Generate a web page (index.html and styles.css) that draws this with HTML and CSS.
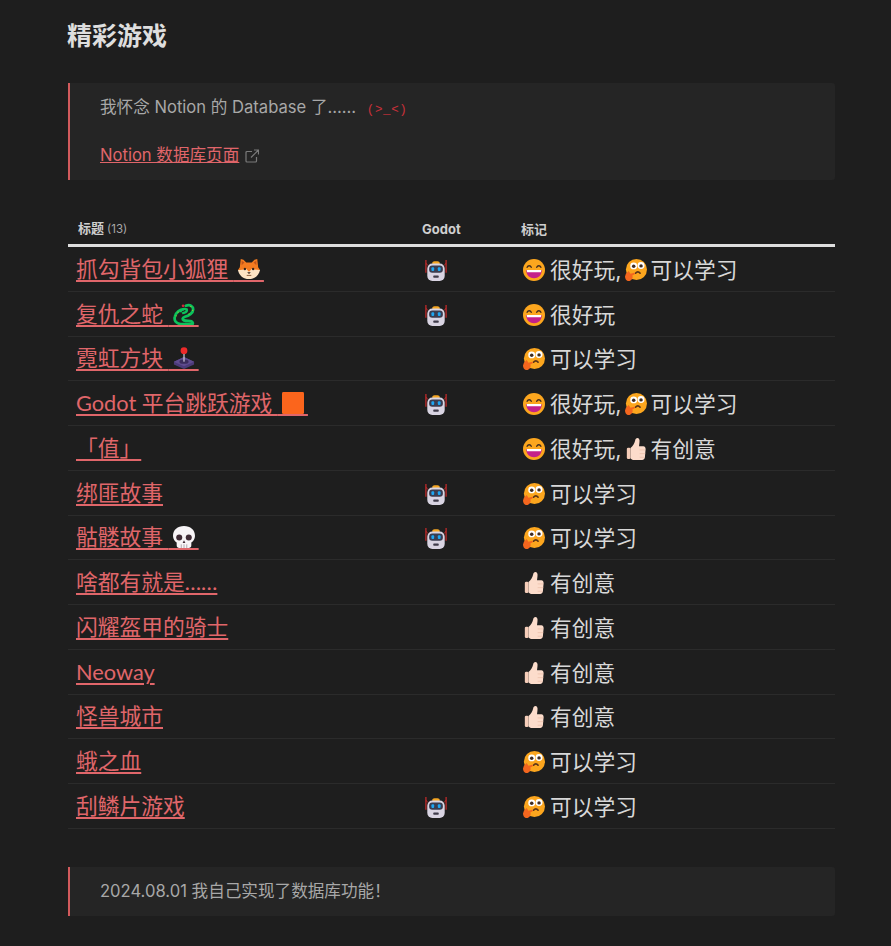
FILE: index.html
```html
<!DOCTYPE html>
<html lang="zh">
<head>
<meta charset="utf-8">
<title>精彩游戏</title>
<link rel="stylesheet" href="styles.css">
</head>
<body>
<svg class="defs" aria-hidden="true">
  <symbol id="fox" viewBox="0 0 24 24">
    <path d="M3 1l3 1 3 3h6l3-3 3-1 1 9 2 3-4 5-8 1-8-1-4-5 2-3z" fill="#f47b20"/>
    <path d="M4 3l3 2-3 3zM20 3l-3 2 3 3z" fill="#c4541a"/>
    <path d="M0 13c3 0 6 0 9-1l3 3 3-3c3 1 6 1 9 1-1 6-6 10-12 10S1 19 0 13z" fill="#fde4c4"/>
    <circle cx="7.500" cy="12" r="1.300" fill="#33231c"/><circle cx="16.500" cy="12" r="1.300" fill="#33231c"/>
    <path d="M10 15.500h4l-2 2z" fill="#33231c"/><path d="M9.500 19h5" stroke="#8a5a3a" stroke-width="1" fill="none"/>
  </symbol>
  <symbol id="snake" viewBox="0 0 24 24">
    <path d="M14 3c5-2 8 1 8 4 0 4-5 7-9 8-3 1-3 3-1 4 3 1 6 0 8 1 2 1 2 3 1 3H8c-5-1-7-4-6-8 1-5 6-8 9-8" fill="none" stroke="#0bc25b" stroke-width="3" stroke-linecap="round"/>
    <path d="M8 10c1-4 5-4 7-3 1 3-3 4-5 4" fill="none" stroke="#0bc25b" stroke-width="2.600"/>
    <circle cx="11" cy="3" r="1.500" fill="#d3263a"/>
    <path d="M19 4h1M21 8h1M17 12h1M5 10h1M3 14h1" stroke="#e8d21e" stroke-width="1"/>
  </symbol>
  <symbol id="joystick" viewBox="0 0 24 24">
    <path d="M1 16l11-5 11 5v3l-11 5-11-5z" fill="#4b3a78"/>
    <path d="M1 16l11-5 11 5-11 5z" fill="#5f4b8f"/>
    <ellipse cx="12" cy="16" rx="5" ry="2.400" fill="#3a2c5c"/>
    <rect x="11.300" y="6" width="1.400" height="10" fill="#c9c4d6"/>
    <circle cx="12" cy="4" r="3.700" fill="#ee2a2a"/>
  </symbol>
  <symbol id="square" viewBox="0 0 24 24">
    <rect x="0" y="0" width="24" height="24" rx="1.500" fill="#fb651c"/>
  </symbol>
  <symbol id="skull" viewBox="0 0 24 24">
    <path d="M12 0C5 0 0 4 0 11c0 3 2 6 4 7v3c0 2 1 3 3 3h10c2 0 3-1 3-3v-3c2-1 4-4 4-7C24 4 19 0 12 0z" fill="#f7f4f6"/>
    <circle cx="6.800" cy="12.500" r="3.300" fill="#3f2b35"/><circle cx="17.200" cy="12.500" r="3.300" fill="#3f2b35"/>
    <path d="M12 15.500l1.500 3h-3z" fill="#3f2b35"/>
    <path d="M9 20v4M12 20v4M15 20v4" stroke="#a9a2a8" stroke-width="1"/>
  </symbol>
  <symbol id="robot" viewBox="0 0 24 24">
    <path d="M8 4c0-2 8-2 8 0v1.500H8z" fill="#f5a623"/>
    <path d="M1 1v14M23 1v14" stroke="#d92c2c" stroke-width="1.200"/>
    <path d="M1 5c0 0 1 0 2 2M23 5c0 0-1 0-2 2" stroke="#d92c2c" stroke-width="1" fill="none"/>
    <rect x="2.500" y="5" width="19" height="19" rx="5.500" fill="#d9d4e2"/>
    <rect x="4.500" y="7" width="15" height="8" rx="3.500" fill="#3a3d50"/>
    <rect x="7" y="9" width="3" height="4" rx="1" fill="#1ea7f2"/>
    <rect x="14" y="9" width="3" height="4" rx="1" fill="#1ea7f2"/>
    <rect x="9" y="18" width="6" height="2.500" rx=".8" fill="#3f3b4a"/>
  </symbol>
  <symbol id="grin" viewBox="0 0 24 24">
    <circle cx="12" cy="12" r="12" fill="#fca61e"/>
    <path d="M4.500 9c1-2.200 3.500-2.200 4.500 0M15 9c1-2.200 3.500-2.200 4.500 0" fill="none" stroke="#3f2b20" stroke-width="1.500" stroke-linecap="round"/>
    <path d="M3.500 12h17c0 6-4 9-8.500 9s-8.500-3-8.500-9z" fill="#c4218a"/>
    <path d="M4 12h16l-.5 2.500h-15z" fill="#fff"/>
  </symbol>
  <symbol id="think" viewBox="0 0 24 24">
    <circle cx="12.500" cy="11.500" r="11.500" fill="#fca61e"/>
    <circle cx="9.500" cy="7.500" r="3.800" fill="#fff"/><circle cx="17.500" cy="7" r="3.800" fill="#fff"/>
    <circle cx="9.500" cy="8" r="1.900" fill="#3f2b20"/><circle cx="17.500" cy="7.500" r="1.900" fill="#3f2b20"/>
    <path d="M11.500 15.500c1.500-2 3.500-2 5 0" fill="none" stroke="#5c3518" stroke-width="1.800" stroke-linecap="round"/>
    <path d="M1 16l3-3 2 3 4-1c1 0 1 2 0 2l-2 1c1 2 0 5-3 6H3c-2-1-3-3-3-5z" fill="#f4661e"/>
  </symbol>
  <symbol id="thumb" viewBox="0 0 24 24">
    <path d="M13.500 0c1.800 0 2.800 2 2.300 4.500L15.300 9h4.700c1.500 0 2.500 1.300 2.500 3l-.8 9c-.3 2-1.500 3-3 3H10c-2 0-3-1-4-2V11c2.500-2 4.300-5 5-8 .3-2 1.300-3 2.500-3z" fill="#fcdccb"/>
    <rect x="2" y="10.500" width="4" height="12.500" rx="1.500" fill="#f6cdb9"/>
    <path d="M16 13h6M16 17h6M16 21h5" stroke="#efc4af" stroke-width="1" fill="none"/>
  </symbol>
</svg>

<main class="page">
  <h2 class="heading">精彩游戏</h2>

  <section class="callout callout-tall">
    <p class="callout-line">我怀念 Notion 的 Database 了…… <code class="kaomoji">(&gt;_&lt;)</code></p>
    <p class="callout-line callout-link-line">
      <a class="callout-link" href="#">Notion 数据库页面</a>
      <svg class="ext" viewBox="0 0 14 14" aria-hidden="true"><path d="M7 2.500H2a1 1 0 0 0-1 1V12a1 1 0 0 0 1 1h8.500a1 1 0 0 0 1-1V8M6 8.500L13 1.500M9 1h4.500v4.500" fill="none" stroke="#7b7b7b" stroke-width="1.200"/></svg>
    </p>
  </section>

  <section class="table">
    <div class="row head">
      <div class="cell">标题 <span class="count">(13)</span></div>
      <div class="cell">Godot</div>
      <div class="cell">标记</div>
    </div>

    <div class="row">
      <div class="cell"><a class="game" href="#">抓勾背包小狐狸 <span class="emoji"><svg class="ico"><use href="#fox"/></svg>&nbsp;</span></a></div>
      <div class="cell"><svg class="ico robot"><use href="#robot"/></svg></div>
      <div class="cell tags"><svg class="ico"><use href="#grin"/></svg><span>很好玩,</span><svg class="ico second"><use href="#think"/></svg><span>可以学习</span></div>
    </div>
    <div class="row">
      <div class="cell"><a class="game" href="#">复仇之蛇 <span class="emoji"><svg class="ico"><use href="#snake"/></svg>&nbsp;</span></a></div>
      <div class="cell"><svg class="ico robot"><use href="#robot"/></svg></div>
      <div class="cell tags"><svg class="ico"><use href="#grin"/></svg><span>很好玩</span></div>
    </div>
    <div class="row">
      <div class="cell"><a class="game" href="#">霓虹方块 <span class="emoji"><svg class="ico"><use href="#joystick"/></svg>&nbsp;</span></a></div>
      <div class="cell"></div>
      <div class="cell tags"><svg class="ico"><use href="#think"/></svg><span>可以学习</span></div>
    </div>
    <div class="row">
      <div class="cell"><a class="game" href="#">Godot 平台跳跃游戏 <span class="emoji"><svg class="ico"><use href="#square"/></svg>&nbsp;</span></a></div>
      <div class="cell"><svg class="ico robot"><use href="#robot"/></svg></div>
      <div class="cell tags"><svg class="ico"><use href="#grin"/></svg><span>很好玩,</span><svg class="ico second"><use href="#think"/></svg><span>可以学习</span></div>
    </div>
    <div class="row">
      <div class="cell"><a class="game" href="#">「值」</a></div>
      <div class="cell"></div>
      <div class="cell tags"><svg class="ico"><use href="#grin"/></svg><span>很好玩,</span><svg class="ico second"><use href="#thumb"/></svg><span>有创意</span></div>
    </div>
    <div class="row">
      <div class="cell"><a class="game" href="#">绑匪故事</a></div>
      <div class="cell"><svg class="ico robot"><use href="#robot"/></svg></div>
      <div class="cell tags"><svg class="ico"><use href="#think"/></svg><span>可以学习</span></div>
    </div>
    <div class="row">
      <div class="cell"><a class="game" href="#">骷髅故事 <span class="emoji"><svg class="ico"><use href="#skull"/></svg>&nbsp;</span></a></div>
      <div class="cell"><svg class="ico robot"><use href="#robot"/></svg></div>
      <div class="cell tags"><svg class="ico"><use href="#think"/></svg><span>可以学习</span></div>
    </div>
    <div class="row">
      <div class="cell"><a class="game" href="#">啥都有就是……</a></div>
      <div class="cell"></div>
      <div class="cell tags"><svg class="ico"><use href="#thumb"/></svg><span>有创意</span></div>
    </div>
    <div class="row">
      <div class="cell"><a class="game" href="#">闪耀盔甲的骑士</a></div>
      <div class="cell"></div>
      <div class="cell tags"><svg class="ico"><use href="#thumb"/></svg><span>有创意</span></div>
    </div>
    <div class="row">
      <div class="cell"><a class="game" href="#">Neoway</a></div>
      <div class="cell"></div>
      <div class="cell tags"><svg class="ico"><use href="#thumb"/></svg><span>有创意</span></div>
    </div>
    <div class="row">
      <div class="cell"><a class="game" href="#">怪兽城市</a></div>
      <div class="cell"></div>
      <div class="cell tags"><svg class="ico"><use href="#thumb"/></svg><span>有创意</span></div>
    </div>
    <div class="row">
      <div class="cell"><a class="game" href="#">蛾之血</a></div>
      <div class="cell"></div>
      <div class="cell tags"><svg class="ico"><use href="#think"/></svg><span>可以学习</span></div>
    </div>
    <div class="row">
      <div class="cell"><a class="game" href="#">刮鳞片游戏</a></div>
      <div class="cell"><svg class="ico robot"><use href="#robot"/></svg></div>
      <div class="cell tags"><svg class="ico"><use href="#think"/></svg><span>可以学习</span></div>
    </div>
  </section>

  <section class="callout callout-short">
    <p class="callout-line">2024.08.01 我自己实现了数据库功能！</p>
  </section>
</main>
</body>
</html>
```

FILE: styles.css
```css
* { box-sizing: border-box; }

html, body { height: 100%; }

body {
  margin: 0;
  background: #1e1e1e;
  color: #dcdcdc;
  font-family: Inter, "Noto Sans CJK SC", sans-serif;
  overflow: hidden;
}

.defs { display: none; }

.page {
  width: 767px;
  margin-left: 68px;
}

.heading {
  margin: 0 0 0 -1px;
  padding-top: 20px;
  height: 83px;
  font-size: 25px;
  line-height: 32px;
  font-weight: 700;
  color: #dedede;
}

.callout {
  background: #252525;
  border-left: 2px solid #d25a5c;
  border-radius: 0 3px 3px 0;
  padding: 12px 30px;
  color: #a8a8a8;
  font-size: 16.6px;
  line-height: 24px;
}

.callout-tall { height: 97px; }
.callout-short { height: 49px; margin-top: 38px; }

.callout-line { margin: 0; }
.callout-link-line { margin-top: 24px; position: relative; top: -3px; }

.callout-link { color: #e0656a; }

.kaomoji {
  margin-left: 6px;
  font-family: "Liberation Mono", monospace;
  font-size: 12.5px;
  letter-spacing: .6px;
  color: #c8303a;
}

.ext {
  width: 14px;
  height: 14px;
  margin-left: 1px;
  vertical-align: -2px;
}

.table { margin-top: 33px; }

.row {
  display: grid;
  grid-template-columns: 346px 99px 1fr;
  height: 44.75px;
  align-items: center;
  padding-top: 2px;
  border-bottom: 1px solid #2b2b2b;
}

.row.head {
  height: 34px;
  align-items: center;
  padding-top: 0;
  border-bottom: 3px solid #dedede;
  font-size: 13px;
  font-weight: 700;
  color: #cfcfcf;
}

.head .cell { padding-left: 10px; }
.head .cell:nth-child(2) { padding-left: 8px; }
.head .cell:nth-child(3) { padding-left: 8px; }

.count {
  font-size: 11.5px;
  font-weight: 400;
  color: #a8a8a8;
}

.cell {
  padding-left: 8px;
  min-width: 0;
  white-space: nowrap;
  line-height: 30px;
}

.game {
  font-family: Lato, "Noto Sans CJK SC", sans-serif;
  font-size: 21.76px;
  color: #e0666a;
  text-decoration-thickness: 2px;
  text-underline-offset: 3px;
}

.emoji {
  position: relative;
  letter-spacing: 24.500px;
}

.emoji .ico {
  position: absolute;
  left: 4px;
  top: 2px;
}

.ico {
  width: 22px;
  height: 22px;
  flex: none;
}

.robot {
  display: block;
  margin-left: 3px;
}

.tags {
  display: flex;
  align-items: center;
  padding-left: 10px;
  font-size: 21.76px;
  color: #d8d8d8;
}

.tags span { margin-left: 5px; }
.tags .second { margin-left: 3px; }
.tags .second + span { margin-left: 4px; }
```
